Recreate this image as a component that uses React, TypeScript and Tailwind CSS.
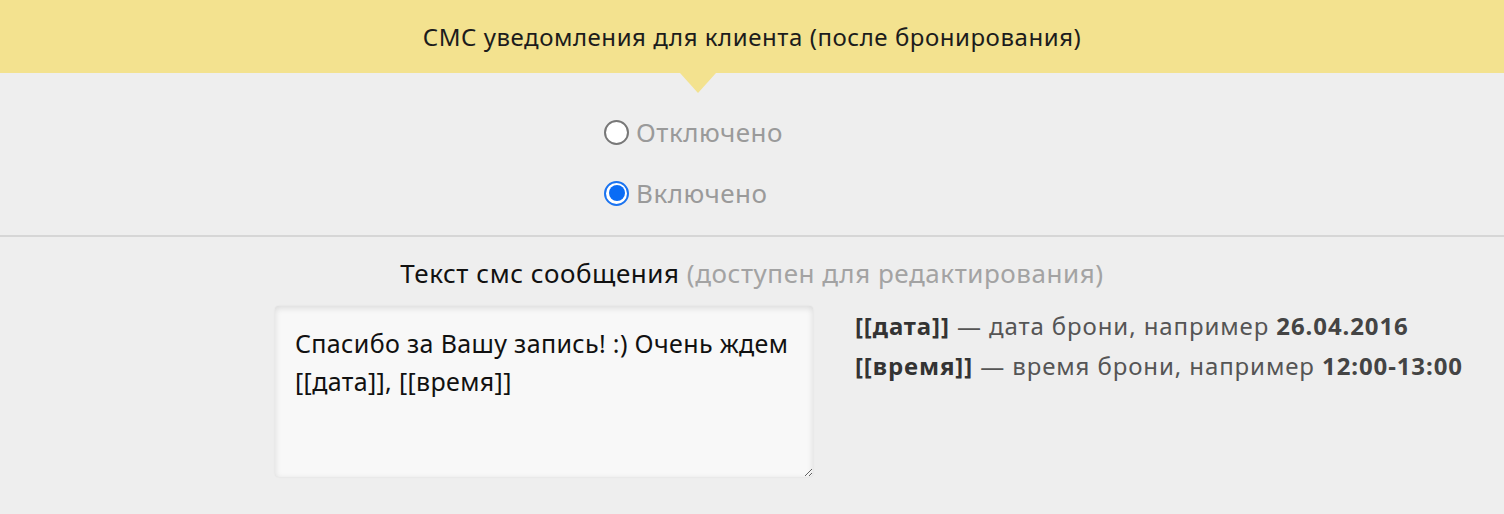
import { useState } from 'react';

const font = { fontFamily: '"Noto Sans", "Open Sans", sans-serif' };

function Radio({ checked, label, onClick }: { checked: boolean; label: string; onClick: () => void }) {
  return (
    <label className="flex items-center gap-[7px] cursor-pointer h-[40px]" onClick={onClick}>
      {checked ? (
        <span className="w-[25px] h-[25px] rounded-full border-[2px] border-[#1a73f0] bg-white flex items-center justify-center">
          <span className="w-[16px] h-[16px] rounded-full bg-[#0a6cf5]" />
        </span>
      ) : (
        <span className="w-[25px] h-[25px] rounded-full border-[2px] border-[#777777] bg-white" />
      )}
      <span className="text-[26px] tracking-[0.5px] text-[#9a9a9a]">{label}</span>
    </label>
  );
}

export default function App() {
  const [enabled, setEnabled] = useState(true);
  const [text, setText] = useState('Спасибо за Вашу запись! :) Очень ждем [[дата]], [[время]]');

  return (
    <div className="w-[1504px] h-[514px] bg-[#eeeeee] overflow-hidden" style={font}>
      {/* Header with pointer */}
      <div className="relative h-[73px] bg-[#f3e28f] flex items-center justify-center">
        <h1 className="text-[24px] text-[#1c1c1c] tracking-[0.55px]">СМС уведомления для клиента (после бронирования)</h1>
        <span className="absolute left-[680px] top-[73px] w-0 h-0 border-l-[18px] border-r-[18px] border-t-[20px] border-l-transparent border-r-transparent border-t-[#f3e28f]" />
      </div>

      {/* Status radios */}
      <div className="pl-[604px] pt-[39px] pb-[22px] flex flex-col gap-[21px]">
        <Radio checked={!enabled} label="Отключено" onClick={() => setEnabled(false)} />
        <Radio checked={enabled} label="Включено" onClick={() => setEnabled(true)} />
      </div>

      <div className="h-[2px] bg-[#d6d6d6]" />

      {/* Message text */}
      <div className="pt-[20px] text-center text-[26px] tracking-[0.55px] leading-[32px]">
        <span className="text-[#111111]">Текст смс сообщения </span>
        <span className="text-[#a3a3a3]">(доступен для редактирования)</span>
      </div>

      <div className="flex items-start gap-[42px] pl-[275px] pt-[17px]">
        <textarea
          value={text}
          onChange={(e) => setText(e.target.value)}
          className="w-[538px] h-[171px] bg-[#f8f8f8] rounded-[4px] px-[20px] pt-[18px] text-[25px] tracking-[0.35px] leading-[38px] text-[#111111] outline-none resize shadow-[inset_0_2px_6px_rgba(0,0,0,0.12),0_0_2px_rgba(0,0,0,0.08)]"
          style={font}
        />
        <div className="text-[24px] tracking-[0.9px] leading-[40px] text-[#555555]">
          <p>
            <b className="text-[#333333]">[[дата]]</b> — дата брони, например <b className="text-[#444444]">26.04.2016</b>
          </p>
          <p>
            <b className="text-[#333333]">[[время]]</b> — время брони, например <b className="text-[#444444]">12:00-13:00</b>
          </p>
        </div>
      </div>
    </div>
  );
}
